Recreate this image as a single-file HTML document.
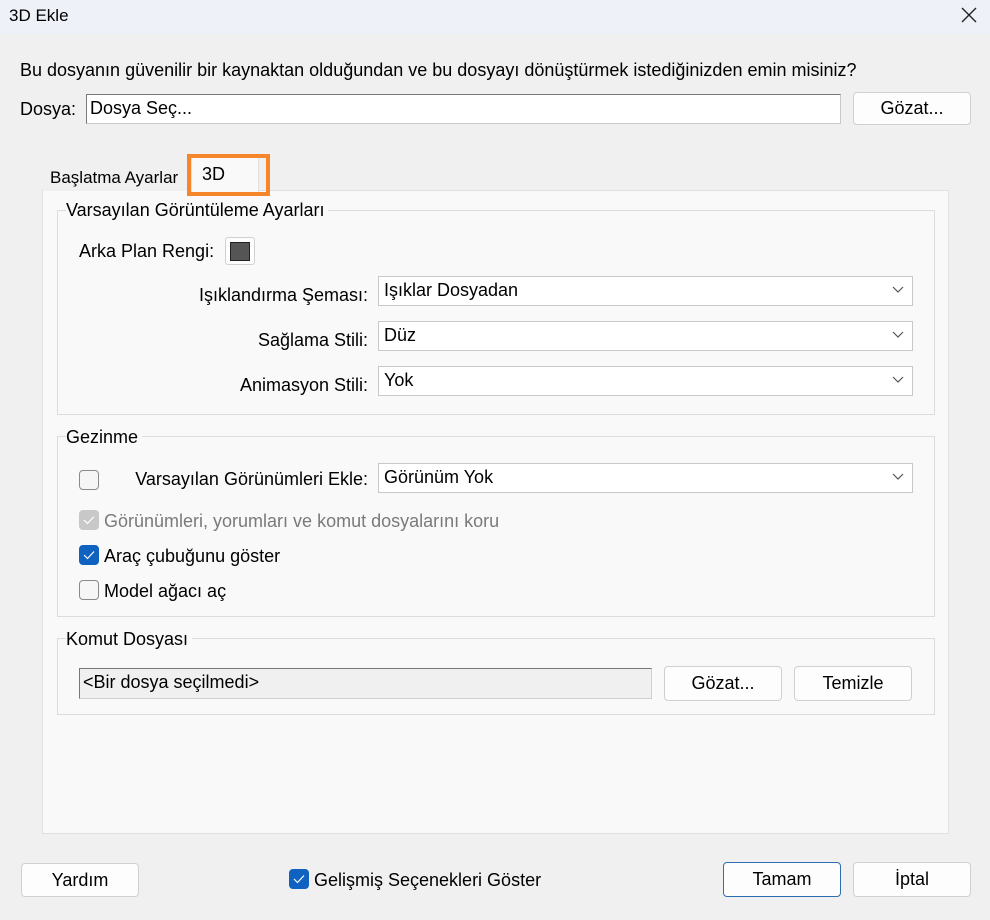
<!DOCTYPE html>
<html><head><meta charset="utf-8"><style>
*{box-sizing:border-box}
body{margin:0;width:990px;height:920px;background:#f0f0f0;font-family:"Liberation Sans",sans-serif;font-size:18px;color:#000;position:relative;overflow:hidden}
.a{position:absolute;white-space:nowrap}
.r{position:absolute;white-space:nowrap;right:622px;text-align:right}
.title{left:0;top:0;width:990px;height:34px;background:#eef1f8}
.btn{position:absolute;background:#fdfdfd;border:1px solid #d0d0d0;border-radius:4px;text-align:center;line-height:30px}
.combo{position:absolute;left:378px;width:535px;height:30px;background:#fff;border:1px solid #c8c8c8;padding-left:5px;line-height:26px}
.combo svg{position:absolute;right:8px;top:9px}
.grp{position:absolute;left:57px;width:878px;border:1px solid #dcdcdc}
.gt{position:absolute;left:66px;background:#f9f9f9;padding:0 4px 0 0}
.cb{position:absolute;width:20px;height:20px;border:1px solid #8a8a8a;border-radius:4px;background:#f6f6f6}
.cb.on{background:#0f62c0;border-color:#0f62c0}
.cb.dis{background:#c8c8c8;border-color:#c8c8c8}
.cb svg{position:absolute;left:3px;top:4px}
</style></head><body>
<div class="a title"></div>
<div class="a" style="left:9px;top:6px;font-size:17px">3D Ekle</div>
<svg class="a" style="left:961px;top:7px" width="16" height="16"><path d="M1 1L15 15M15 1L1 15" stroke="#222" stroke-width="1.4"/></svg>
<div class="a" style="left:20px;top:60px">Bu dosyanın güvenilir bir kaynaktan olduğundan ve bu dosyayı dönüştürmek istediğinizden emin misiniz?</div>
<div class="a" style="left:20px;top:99px">Dosya:</div>
<div class="a" style="left:86px;top:94px;width:755px;height:30px;background:#fff;border:1px solid #c8c8c8;border-left-color:#777;border-top-color:#777;padding-left:3px;line-height:26px">Dosya Seç...</div>
<div class="btn" style="left:853px;top:92px;width:118px;height:33px">Gözat...</div>
<div class="a" style="left:42px;top:190px;width:907px;height:644px;background:#f9f9f9;border:1px solid #e0e0e0"></div>
<div class="a" style="left:43px;top:163px;width:146px;height:28px;background:#f0f0f0"></div>
<div class="a" style="left:50px;top:168px;font-size:17px">Başlatma Ayarlar</div>
<div class="a" style="left:191px;top:156px;width:68px;height:36px;background:#f9f9f9;border:1px solid #e0e0e0;border-bottom:none"></div>
<div class="a" style="left:187px;top:154px;width:83px;height:42px;border:4px solid #f5862b"></div>
<div class="a" style="left:202px;top:164px">3D</div>

<div class="grp" style="top:210px;height:205px"></div>
<div class="gt" style="top:200px">Varsayılan Görüntüleme Ayarları</div>
<div class="a" style="left:79px;top:241px">Arka Plan Rengi:</div>
<div class="a" style="left:225px;top:237px;width:30px;height:28px;background:#fdfdfd;border:1px solid #d0d0d0;border-radius:3px"></div>
<div class="a" style="left:230px;top:242px;width:20px;height:19px;background:#555;border:1px solid #222"></div>
<div class="r" style="top:285px">Işıklandırma Şeması:</div>
<div class="combo" style="top:276px">Işıklar Dosyadan<svg width="12" height="8"><path d="M1 1L6 6L11 1" fill="none" stroke="#555" stroke-width="1.2"/></svg></div>
<div class="r" style="top:330px">Sağlama Stili:</div>
<div class="combo" style="top:321px">Düz<svg width="12" height="8"><path d="M1 1L6 6L11 1" fill="none" stroke="#555" stroke-width="1.2"/></svg></div>
<div class="r" style="top:375px">Animasyon Stili:</div>
<div class="combo" style="top:366px">Yok<svg width="12" height="8"><path d="M1 1L6 6L11 1" fill="none" stroke="#555" stroke-width="1.2"/></svg></div>

<div class="grp" style="top:436px;height:181px"></div>
<div class="gt" style="top:427px">Gezinme</div>
<div class="cb" style="left:79px;top:470px"></div>
<div class="r" style="top:469px">Varsayılan Görünümleri Ekle:</div>
<div class="combo" style="top:463px">Görünüm Yok<svg width="12" height="8"><path d="M1 1L6 6L11 1" fill="none" stroke="#555" stroke-width="1.2"/></svg></div>
<div class="cb dis" style="left:79px;top:510px"><svg width="12" height="10"><path d="M1 5L4.5 8.5L11 1.5" fill="none" stroke="#fff" stroke-width="1.2"/></svg></div>
<div class="a" style="left:104px;top:511px;color:#7a7a7a">Görünümleri, yorumları ve komut dosyalarını koru</div>
<div class="cb on" style="left:79px;top:545px"><svg width="12" height="10"><path d="M1 5L4.5 8.5L11 1.5" fill="none" stroke="#fff" stroke-width="1.2"/></svg></div>
<div class="a" style="left:104px;top:546px">Araç çubuğunu göster</div>
<div class="cb" style="left:79px;top:580px"></div>
<div class="a" style="left:104px;top:581px">Model ağacı aç</div>

<div class="grp" style="top:638px;height:77px"></div>
<div class="gt" style="top:629px">Komut Dosyası</div>
<div class="a" style="left:79px;top:668px;width:573px;height:31px;background:#f0f0f0;border:1px solid #d0d0d0;border-left-color:#777;border-top-color:#777;padding-left:3px;line-height:26px">&lt;Bir dosya seçilmedi&gt;</div>
<div class="btn" style="left:664px;top:666px;width:118px;height:35px;line-height:33px">Gözat...</div>
<div class="btn" style="left:794px;top:666px;width:118px;height:35px;line-height:33px">Temizle</div>

<div class="btn" style="left:21px;top:863px;width:118px;height:34px;line-height:32px">Yardım</div>
<div class="cb on" style="left:289px;top:869px"><svg width="12" height="10"><path d="M1 5L4.5 8.5L11 1.5" fill="none" stroke="#fff" stroke-width="1.2"/></svg></div>
<div class="a" style="left:314px;top:870px">Gelişmiş Seçenekleri Göster</div>
<div class="btn" style="left:723px;top:862px;width:118px;height:35px;line-height:33px;border-color:#2f6db3">Tamam</div>
<div class="btn" style="left:853px;top:862px;width:118px;height:35px;line-height:33px">İptal</div>
</body></html>
